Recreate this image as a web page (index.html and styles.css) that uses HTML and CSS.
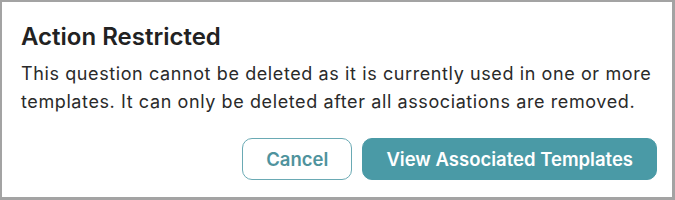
FILE: index.html
```html
<!DOCTYPE html>
<html>
<head>
<meta charset="utf-8">
<link rel="stylesheet" href="styles.css">
</head>
<body>
<div class="dialog">
  <h2 class="title">Action Restricted</h2>
  <p class="message">This question cannot be deleted as it is currently used in one or more templates. It can only be deleted after all associations are removed.</p>
  <div class="actions">
    <button class="btn btn-outline">Cancel</button>
    <button class="btn btn-primary">View Associated Templates</button>
  </div>
</div>
</body>
</html>
```
FILE: styles.css
```css
html, body {
  margin: 0;
  padding: 0;
  background: #ffffff;
}
.dialog {
  box-sizing: border-box;
  width: 675px;
  height: 200px;
  border: 2px solid #a3a3a3;
  border-right-width: 3px;
  border-bottom-width: 3px;
  padding: 20px 15px 0 19px;
  font-family: Inter, "Noto Sans", sans-serif;
  color: #1f1f1f;
  background: #fff;
}
.title {
  margin: 0;
  font-size: 24px;
  font-weight: 600;
  line-height: 30px;
  color: #222;
}
.message {
  margin: 8px 0 0;
  font-size: 18px;
  letter-spacing: 0.6px;
  line-height: 28px;
  color: #2a2a2a;
}
.actions {
  display: flex;
  justify-content: flex-end;
  gap: 10px;
  margin-top: 22px;
}
.btn {
  font-family: Inter, "Noto Sans", sans-serif;
  font-size: 18.5px;
  font-weight: 600;
  height: 42px;
  border-radius: 10px;
  padding: 0 23px;
  cursor: pointer;
}
.btn-outline {
  background: #fff;
  color: #4f939d;
  border: 1px solid #6aaab4;
}
.btn-primary {
  background: #4a9aa6;
  color: #fff;
  border: 1px solid #4a9aa6;
}
```
